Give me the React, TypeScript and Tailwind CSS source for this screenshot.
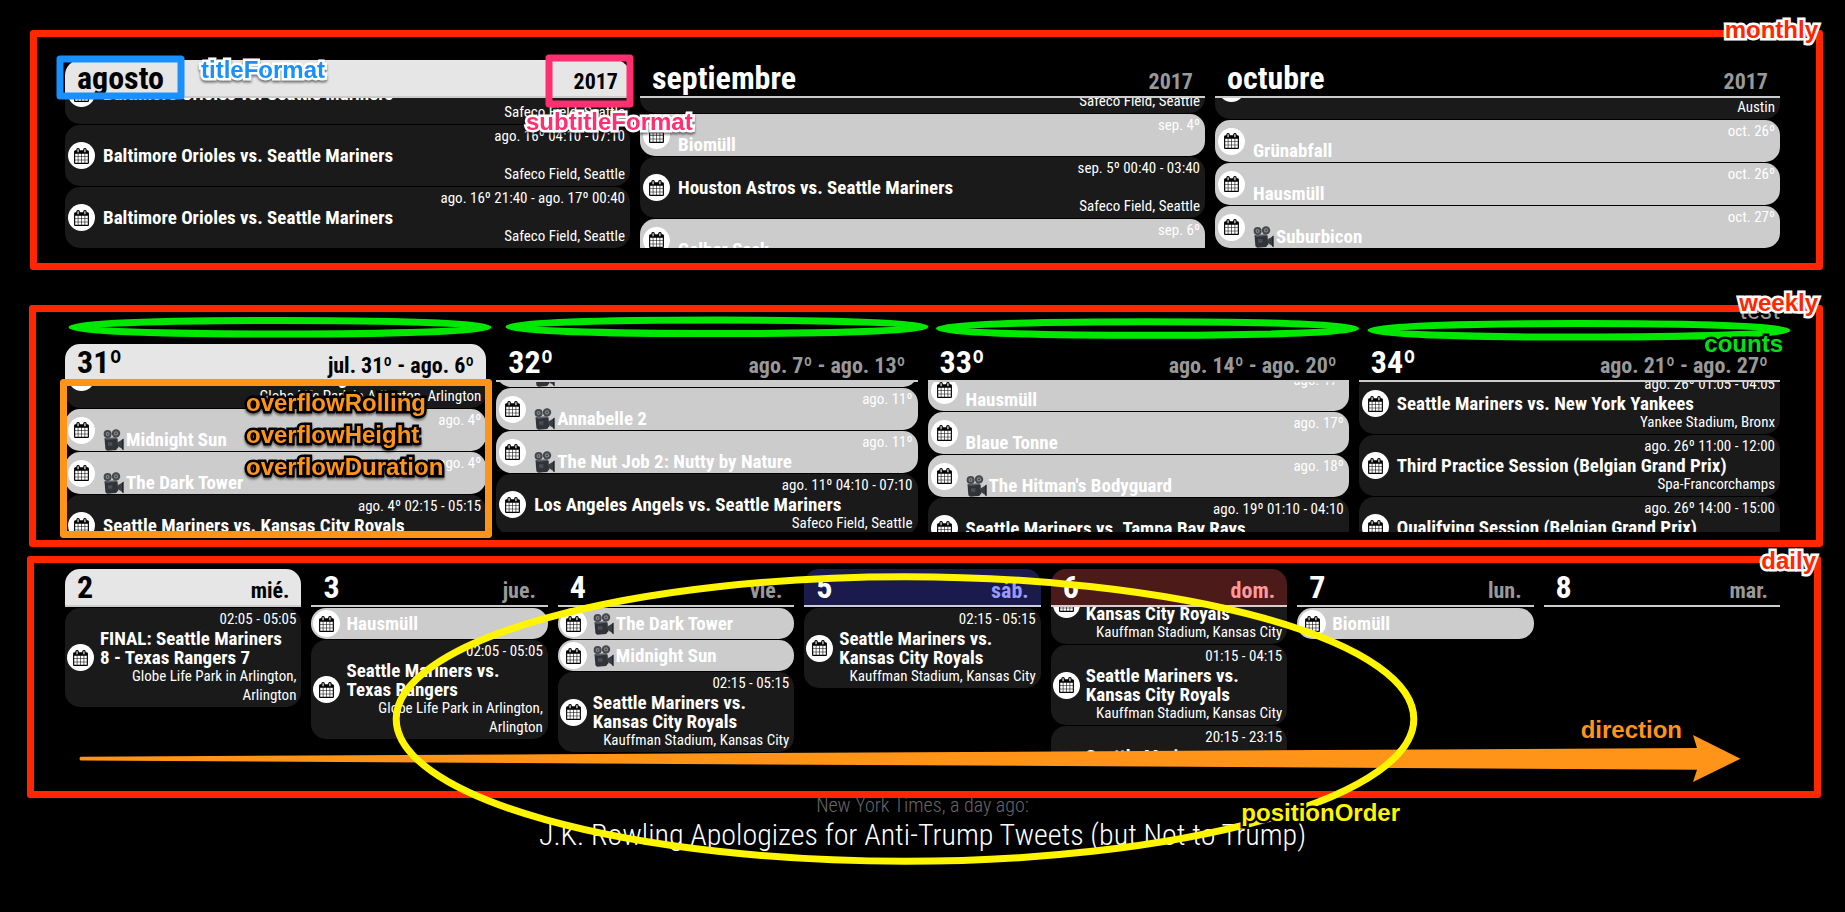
import type { ReactNode } from 'react';

type CalendarEvent = {
  title: string;
  time?: string;
  place?: string;
  movie?: boolean;
  allDay?: boolean;
};

type Slot = {
  title: string;
  subtitle: string;
  tone?: 'today' | 'saturday' | 'sunday';
  scroll?: number;
  events: CalendarEvent[];
};

const mariners = (rival: string, time: string, place: string): CalendarEvent => ({
  title: `Seattle Mariners vs. ${rival}`,
  time,
  place,
});

const months: Slot[] = [
  {
    title: 'agosto',
    subtitle: '2017',
    tone: 'today',
    scroll: 36,
    events: [
      { title: 'Baltimore Orioles vs. Seattle Mariners', time: 'ago. 15º 04:10 - 07:10', place: 'Safeco Field, Seattle' },
      { title: 'Baltimore Orioles vs. Seattle Mariners', time: 'ago. 16º 04:10 - 07:10', place: 'Safeco Field, Seattle' },
      { title: 'Baltimore Orioles vs. Seattle Mariners', time: 'ago. 16º 21:40 - ago. 17º 00:40', place: 'Safeco Field, Seattle' },
    ],
  },
  {
    title: 'septiembre',
    subtitle: '2017',
    scroll: 47,
    events: [
      { title: 'Oakland Athletics vs. Seattle Mariners', time: 'sep. 3º 22:10 - 01:10', place: 'Safeco Field, Seattle' },
      { title: 'Biomüll', time: 'sep. 4º', allDay: true },
      { title: 'Houston Astros vs. Seattle Mariners', time: 'sep. 5º 00:40 - 03:40', place: 'Safeco Field, Seattle' },
      { title: 'Gelber Sack', time: 'sep. 6º', allDay: true },
    ],
  },
  {
    title: 'octubre',
    subtitle: '2017',
    scroll: 41,
    events: [
      { title: 'United States Grand Prix', time: 'oct. 22º 21:00 - 23:00', place: 'Austin' },
      { title: 'Grünabfall', time: 'oct. 26º', allDay: true },
      { title: 'Hausmüll', time: 'oct. 26º', allDay: true },
      { title: 'Suburbicon', time: 'oct. 27º', allDay: true, movie: true },
    ],
  },
];

const weeks: Slot[] = [
  {
    title: '31º',
    subtitle: 'jul. 31º - ago. 6º',
    tone: 'today',
    scroll: 36,
    events: [
      mariners('Texas Rangers', 'ago. 3º 02:05 - 05:05', 'Globe Life Park in Arlington, Arlington'),
      { title: 'Midnight Sun', time: 'ago. 4º', allDay: true, movie: true },
      { title: 'The Dark Tower', time: 'ago. 4º', allDay: true, movie: true },
      mariners('Kansas City Royals', 'ago. 4º 02:15 - 05:15', 'Kauffman Stadium, Kansas City'),
    ],
  },
  {
    title: '32º',
    subtitle: 'ago. 7º - ago. 13º',
    scroll: 38,
    events: [
      { title: 'The Glass Castle', time: 'ago. 11º', allDay: true, movie: true },
      { title: 'Annabelle 2', time: 'ago. 11º', allDay: true, movie: true },
      { title: 'The Nut Job 2: Nutty by Nature', time: 'ago. 11º', allDay: true, movie: true },
      { title: 'Los Angeles Angels vs. Seattle Mariners', time: 'ago. 11º 04:10 - 07:10', place: 'Safeco Field, Seattle' },
    ],
  },
  {
    title: '33º',
    subtitle: 'ago. 14º - ago. 20º',
    scroll: 14,
    events: [
      { title: 'Hausmüll', time: 'ago. 17º', allDay: true },
      { title: 'Blaue Tonne', time: 'ago. 17º', allDay: true },
      { title: "The Hitman's Bodyguard", time: 'ago. 18º', allDay: true, movie: true },
      mariners('Tampa Bay Rays', 'ago. 19º 01:10 - 04:10', 'Tropicana Field, St. Petersburg'),
    ],
  },
  {
    title: '34º',
    subtitle: 'ago. 21º - ago. 27º',
    scroll: 10,
    events: [
      mariners('New York Yankees', 'ago. 26º 01:05 - 04:05', 'Yankee Stadium, Bronx'),
      { title: 'Third Practice Session (Belgian Grand Prix)', time: 'ago. 26º 11:00 - 12:00', place: 'Spa-Francorchamps' },
      { title: 'Qualifying Session (Belgian Grand Prix)', time: 'ago. 26º 14:00 - 15:00', place: 'Spa-Francorchamps' },
    ],
  },
];

const kauffman = 'Kauffman Stadium, Kansas City';

const days: Slot[] = [
  {
    title: '2',
    subtitle: 'mié.',
    tone: 'today',
    events: [
      {
        title: 'FINAL: Seattle Mariners 8 - Texas Rangers 7',
        time: '02:05 - 05:05',
        place: 'Globe Life Park in Arlington, Arlington',
      },
    ],
  },
  {
    title: '3',
    subtitle: 'jue.',
    events: [
      { title: 'Hausmüll', allDay: true },
      mariners('Texas Rangers', '02:05 - 05:05', 'Globe Life Park in Arlington, Arlington'),
    ],
  },
  {
    title: '4',
    subtitle: 'vie.',
    events: [
      { title: 'The Dark Tower', allDay: true, movie: true },
      { title: 'Midnight Sun', allDay: true, movie: true },
      mariners('Kansas City Royals', '02:15 - 05:15', kauffman),
    ],
  },
  { title: '5', subtitle: 'sáb.', tone: 'saturday', events: [mariners('Kansas City Royals', '02:15 - 05:15', kauffman)] },
  {
    title: '6',
    subtitle: 'dom.',
    tone: 'sunday',
    scroll: 44,
    events: [
      mariners('Kansas City Royals', '01:15 - 04:15', kauffman),
      mariners('Kansas City Royals', '01:15 - 04:15', kauffman),
      mariners('Kansas City Royals', '20:15 - 23:15', kauffman),
    ],
  },
  { title: '7', subtitle: 'lun.', events: [{ title: 'Biomüll', allDay: true }] },
  { title: '8', subtitle: 'mar.', events: [] },
];

const headerTones = {
  today: 'rounded-t-[15px] border-[#cccccc] bg-[#e6e6e6] text-black',
  saturday: 'rounded-t-[15px] border-[#ccccdd] bg-[#1a1a4d] text-white',
  sunday: 'rounded-t-[15px] border-[#ddcccc] bg-[#4d1a1a] text-white',
  plain: 'border-[#cccccc] text-white',
};

const subtitleTones = {
  today: 'text-black',
  saturday: 'text-[#9999ff]',
  sunday: 'text-[#ff9999]',
  plain: 'text-[#999999]',
};

function CalendarIcon() {
  return (
    <span className="flex size-[27px] shrink-0 items-center justify-center rounded-full bg-white text-black">
      <svg viewBox="0 0 1664 1792" className="h-4 w-[15px]" fill="currentColor" aria-hidden="true">
        <path d="M128 1664h288v-288h-288v288zM480 1664h320v-288h-320v288zM128 1312h288v-320h-288v320zM480 1312h320v-320h-320v320zM128 928h288v-288h-288v288zM864 1664h320v-288h-320v288zM480 928h320v-288h-320v288zM1248 1664h288v-288h-288v288zM864 1312h320v-320h-320v320zM512 448v-288q0-13-9.5-22.5t-22.5-9.5h-64q-13 0-22.5 9.5t-9.5 22.5v288q0 13 9.5 22.5t22.5 9.5h64q13 0 22.5-9.5t9.5-22.5zM1248 1312h288v-320h-288v320zM864 928h320v-288h-320v288zM1248 928h288v-288h-288v288zM1280 448v-288q0-13-9.5-22.5t-22.5-9.5h-64q-13 0-22.5 9.5t-9.5 22.5v288q0 13 9.5 22.5t22.5 9.5h64q13 0 22.5-9.5t9.5-22.5zM1664 384v1280q0 52-38 90t-90 38h-1408q-52 0-90-38t-38-90v-1280q0-52 38-90t90-38h128v-96q0-66 47-113t113-47h64q66 0 113 47t47 113v96h384v-96q0-66 47-113t113-47h64q66 0 113 47t47 113v96h128q52 0 90 38t38 90z" />
      </svg>
    </span>
  );
}

function MovieCamera() {
  return (
    <svg viewBox="0 0 21 22" className="-my-1 mr-[2px] h-[22px] w-[21px] shrink-0" aria-hidden="true">
      <circle cx="4.6" cy="5" r="4" fill="#45484d" />
      <circle cx="13" cy="4.4" r="4.2" fill="#45484d" />
      <circle cx="4.6" cy="5" r="2" fill="#85898f" />
      <circle cx="13" cy="4.4" r="2.1" fill="#85898f" />
      <circle cx="4.6" cy="5" r="0.8" fill="#2b2d31" />
      <circle cx="13" cy="4.4" r="0.8" fill="#2b2d31" />
      <path d="M1.5 9.2 13 8.4l1.6 1.4.6 8.4-2 2.8-9 .8-1.8-1.6z" fill="#303338" />
      <path d="M1.5 9.2 13 8.4l1.6 1.4-11 .9z" fill="#5c6067" />
      <path d="M5 13.2h4.4v3.6H5z" fill="#4a4e55" />
      <path d="M14.8 13.2 20.2 10v10.6l-5.2-3.4z" fill="#3a3d43" />
      <path d="M19.2 10.4 20.6 9.6v11.6l-1.4-.8z" fill="#1e2024" />
    </svg>
  );
}

function EventItem({ event, compact }: { event: CalendarEvent; compact: boolean }) {
  return (
    <li
      className={`flex shrink-0 items-center rounded-[15px] py-[2px] pr-[5px] text-white ${
        event.allDay ? 'bg-[#cccccc]' : 'bg-[#1a1a1a]'
      } ${compact ? 'gap-[6px] pl-[2px]' : 'gap-2 pl-[3px]'}`}
    >
      <CalendarIcon />
      <div className="min-w-0 flex-1">
        {event.time && <p className="text-right text-[15px] leading-[19px]">{event.time}</p>}
        <h3 className="flex items-center pr-1 text-[19px] leading-[19px] font-bold">
          {event.movie && <MovieCamera />}
          {event.title}
        </h3>
        {event.place && <p className="text-right text-[15px] leading-[19px]">{event.place}</p>}
      </div>
    </li>
  );
}

function SlotColumn({ slot, compact }: { slot: Slot; compact: boolean }) {
  const tone = slot.tone ?? 'plain';
  return (
    <article className="min-w-0">
      <header className={`flex h-[38px] items-baseline justify-between border-b-2 px-3 font-bold ${headerTones[tone]}`}>
        <h2 className="text-[32px] leading-9">{slot.title}</h2>
        <p className={`text-[22px] leading-6 ${subtitleTones[tone]}`}>{slot.subtitle}</p>
      </header>
      <div className="h-[150px] overflow-hidden">
        <ul className="flex flex-col gap-px pt-px" style={{ marginTop: -(slot.scroll ?? 0) }}>
          {slot.events.map((event, index) => (
            <EventItem key={index} event={event} compact={compact} />
          ))}
        </ul>
      </div>
    </article>
  );
}

function Drawing({ children }: { children: ReactNode }) {
  return (
    <svg
      viewBox="0 0 1715 188"
      preserveAspectRatio="none"
      className="pointer-events-none absolute inset-0 h-full w-full overflow-visible"
      fill="none"
      strokeWidth="7"
      strokeLinejoin="round"
      aria-hidden="true"
    >
      {children}
    </svg>
  );
}

function Note({ className, children }: { className: string; children: ReactNode }) {
  return (
    <span
      className={`pointer-events-none absolute font-['Liberation_Sans',Arial,sans-serif] text-2xl leading-8 font-bold whitespace-nowrap [paint-order:stroke_fill] [-webkit-text-stroke-width:5px] [stroke-linejoin:round] ${className}`}
    >
      {children}
    </span>
  );
}

export default function App() {
  return (
    <main className="min-h-screen overflow-hidden bg-black px-[65px] pt-[60px] pb-14 font-['Roboto_Condensed','Roboto',sans-serif]">
      <section aria-label="monthly" className="relative grid grid-cols-3 gap-[10px]">
        {months.map((slot) => (
          <SlotColumn key={slot.title} slot={slot} compact={false} />
        ))}
        <div className="pointer-events-none absolute -top-[30px] -right-[43px] -bottom-[22px] -left-[35px] rounded-[3px] border-7 border-[#ff2600]" />
        <Drawing>
          <rect x="-5" y="-1" width="121" height="37" stroke="#1a90ff" />
          <rect x="484" y="-2" width="81" height="46" stroke="#ff2f70" />
        </Drawing>
        <Note className="-top-[6px] left-[136px] text-[#1a90ff] drop-shadow-[0_2px_1px_rgba(0,0,0,0.5)] [-webkit-text-stroke-color:#fff]">
          titleFormat
        </Note>
        <Note className="top-[46px] left-[461px] text-[#ff2f70] drop-shadow-[0_2px_1px_rgba(0,0,0,0.5)] [-webkit-text-stroke-color:#fff]">
          subtitleFormat
        </Note>
        <Note className="-top-[46px] -right-[38px] text-[#ff2600] [-webkit-text-stroke-color:#fff]">monthly</Note>
      </section>

      <p className="h-24 pt-[51px] text-right font-['Roboto',sans-serif] text-2xl leading-6 text-[#999999]">test</p>

      <section aria-label="weekly" className="relative grid grid-cols-4 gap-[10px]">
        {weeks.map((slot) => (
          <SlotColumn key={slot.title} slot={slot} compact={false} />
        ))}
        <div className="pointer-events-none absolute -top-[39px] -right-[43px] -bottom-[15px] -left-[36px] rounded-[3px] border-7 border-[#ff2600]" />
        <Drawing>
          <g stroke="#00e800">
            <ellipse cx="215" cy="-16.7" rx="208" ry="6.8" />
            <ellipse cx="652" cy="-17.2" rx="208" ry="6.8" />
            <ellipse cx="1082.5" cy="-15.5" rx="208" ry="6.8" />
            <ellipse cx="1514" cy="-13.7" rx="208" ry="6.8" />
          </g>
          <rect x="-1.5" y="38.5" width="425" height="152" stroke="#ff9419" />
        </Drawing>
        <Note className="top-[43px] left-[181px] text-[#ff9419] drop-shadow-[0_2px_1px_rgba(0,0,0,0.5)] [-webkit-text-stroke-color:#000]">
          overflowRolling
          <br />
          overflowHeight
          <br />
          overflowDuration
        </Note>
        <Note className="-top-[16px] -right-[3px] text-[#00e01a] [-webkit-text-stroke-color:#000]">counts</Note>
        <Note className="-top-[57px] -right-[38px] text-[#ff2600] [-webkit-text-stroke-color:#fff]">weekly</Note>
      </section>

      <section aria-label="daily" className="relative z-10 mt-[37px] grid grid-cols-7 gap-[10px]">
        {days.map((slot) => (
          <SlotColumn key={slot.title} slot={slot} compact />
        ))}
        <div className="pointer-events-none absolute -top-[13px] -right-[41px] -bottom-[41px] -left-[38px] rounded-[3px] border-7 border-[#ff2600]" />
        <Drawing>
          <path
            d="M15.5 187.7 1632 179l-4-13 47.5 23.7L1628 213l4-12.3L15.5 191.5q-2-2 0-3.8z"
            fill="#ff9419"
            stroke="none"
          />
          <ellipse cx="840" cy="150" rx="508.8" ry="142.3" stroke="#fff500" />
        </Drawing>
        <Note className="right-[98px] bottom-[11px] text-[#ff9419] [-webkit-text-stroke-color:#000]">direction</Note>
        <Note className="right-[380px] -bottom-[72px] text-[#fff500] [-webkit-text-stroke-color:#000]">positionOrder</Note>
        <Note className="-top-[24px] -right-[36px] text-[#ff2600] [-webkit-text-stroke-color:#fff]">daily</Note>
      </section>

      <footer className="mt-9 text-center font-light">
        <p className="text-xl leading-6 text-[#666666]">New York Times, a day ago:</p>
        <p className="text-3xl leading-9 text-white">J.K. Rowling Apologizes for Anti-Trump Tweets (but Not to Trump)</p>
      </footer>
    </main>
  );
}
